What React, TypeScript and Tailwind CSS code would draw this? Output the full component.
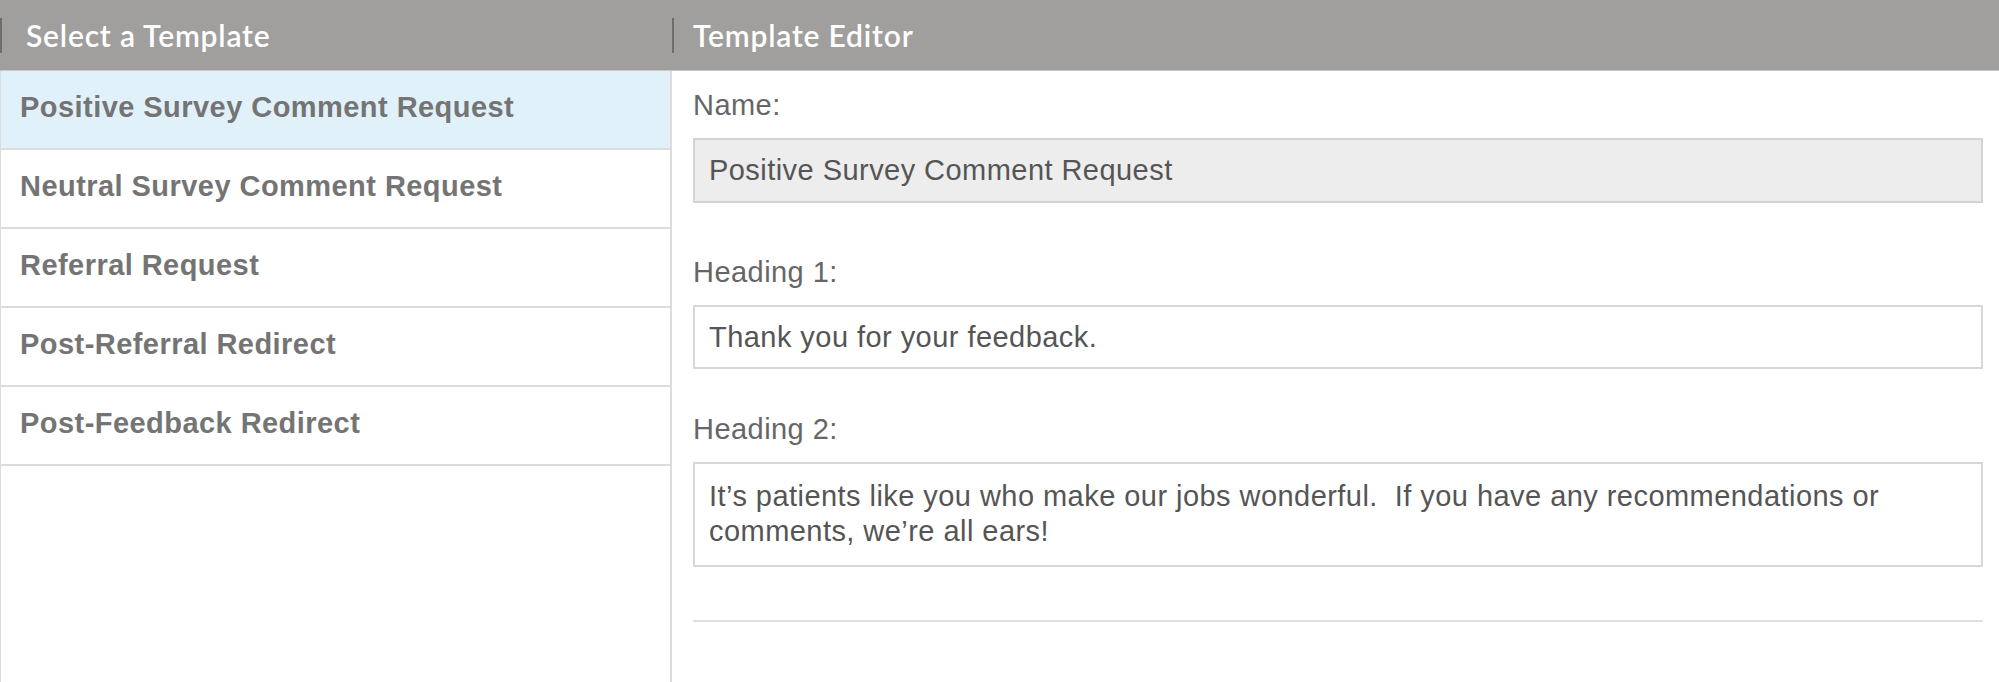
import { useState } from "react";

const templates = [
  "Positive Survey Comment Request",
  "Neutral Survey Comment Request",
  "Referral Request",
  "Post-Referral Redirect",
  "Post-Feedback Redirect",
];

export default function App() {
  const [selected, setSelected] = useState(0);

  return (
    <div className="flex flex-col h-[682px] bg-white font-['Liberation_Sans',Arial,sans-serif] overflow-hidden">
      {/* header bar */}
      <div className="flex h-[71px] shrink-0 bg-[#a09f9d] border-b border-[#c9c9c9] font-['Lato','Open_Sans',sans-serif]">
        <div className="w-[672px] flex items-center">
          <div className="w-[2px] h-[35px] bg-[#6e6e6e]" />
          <span className="ml-[24px] text-white text-[30px] font-semibold tracking-[0.8px]">Select a Template</span>
        </div>
        <div className="flex-1 flex items-center">
          <div className="w-[2px] h-[35px] bg-[#6e6e6e]" />
          <span className="ml-[19px] text-white text-[30px] font-semibold tracking-[0.8px]">Template Editor</span>
        </div>
      </div>

      <div className="flex flex-1 min-h-0">
        {/* template list */}
        <div className="w-[672px] shrink-0 border-l border-r-2 border-[#dcdcdc]">
          {templates.map((t, i) => (
            <button
              key={t}
              onClick={() => setSelected(i)}
              className={`w-full h-[79px] flex items-center pl-[19px] pb-[3px] text-left border-b-2 border-[#dcdcdc] text-[#747474] text-[29px] font-bold tracking-[0.45px] ${selected === i ? "bg-[#e1f1fa]" : "bg-white"}`}
            >
              {t}
            </button>
          ))}
        </div>

        {/* editor */}
        <div className="flex-1 pl-[21px] pr-[16px] pt-[20px] text-[29px] tracking-[0.45px]">
          <div className="text-[#666] leading-[29px]">Name:</div>
          <input
            readOnly
            value="Positive Survey Comment Request"
            className="mt-[18px] w-full h-[65px] px-[14px] bg-[#ededed] border-2 border-[#d3d3d3] text-[#555] outline-none"
          />

          <div className="mt-[55px] text-[#666] leading-[29px]">Heading 1:</div>
          <input
            readOnly
            value="Thank you for your feedback."
            className="mt-[18px] w-full h-[64px] px-[14px] bg-white border-2 border-[#d8d8d8] text-[#555] outline-none"
          />

          <div className="mt-[46px] text-[#666] leading-[29px]">Heading 2:</div>
          <textarea
            readOnly
            rows={2}
            value={"It\u2019s patients like you who make our jobs wonderful.  If you have any recommendations or comments, we\u2019re all ears!"}
            className="mt-[18px] block w-full h-[105px] px-[14px] pt-[15px] pb-[14px] leading-[35px] bg-white border-2 border-[#d8d8d8] text-[#555] resize-none outline-none overflow-hidden"
          />

          <div className="mt-[53px] h-[2px] bg-[#dedede]" />
        </div>
      </div>
    </div>
  );
}
